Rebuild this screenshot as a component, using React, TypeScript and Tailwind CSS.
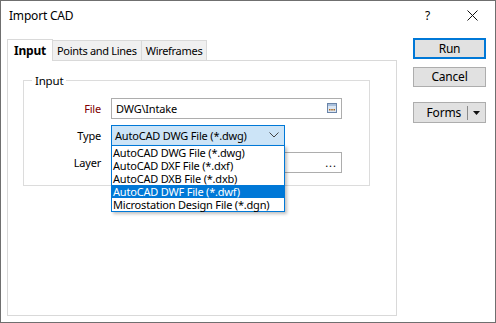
import { useState } from "react"

const fileTypes = [
  "AutoCAD DWG File (*.dwg)",
  "AutoCAD DXF File (*.dxf)",
  "AutoCAD DXB File (*.dxb)",
  "AutoCAD DWF File (*.dwf)",
  "Microstation Design File (*.dgn)",
]

function BrowseIcon() {
  return (
    <svg width="10" height="10" viewBox="0 0 10 10">
      <rect x="0.5" y="0.5" width="9" height="9" fill="#dbe6f3" stroke="#6a84a8" />
      <rect x="1" y="1" width="8" height="2" fill="#a9c0dc" />
      <rect x="2" y="6" width="1.5" height="1.5" fill="#b06a1c" />
      <rect x="4.25" y="6" width="1.5" height="1.5" fill="#b06a1c" />
      <rect x="6.5" y="6" width="1.5" height="1.5" fill="#b06a1c" />
    </svg>
  )
}

function Chevron() {
  return (
    <svg width="10" height="6" viewBox="0 0 10 6">
      <path d="M0.5 0.5 L5 5 L9.5 0.5" fill="none" stroke="#444" strokeWidth="1" />
    </svg>
  )
}

export default function App() {
  const [tab] = useState("Input")
  const tabs = ["Input", "Points and Lines", "Wireframes"]

  return (
    <div className="flex h-[323px] w-[496px] flex-col whitespace-nowrap border border-[#6f6f6f] bg-white font-['Noto_Sans',sans-serif] text-[11px] leading-none tracking-[-0.2px] text-black">
      {/* title bar */}
      <div className="flex h-[29px] shrink-0 items-center text-[12px]">
        <span className="pl-[8px]">Import CAD</span>
        <span className="ml-auto mr-[37px]">?</span>
        <svg width="11" height="11" viewBox="0 0 11 11" className="mr-[17px]">
          <path d="M0.5 0.5 L10.5 10.5 M10.5 0.5 L0.5 10.5" stroke="#111" strokeWidth="1" />
        </svg>
      </div>

      <div className="flex flex-1 pt-[8px]">
        {/* left side: tabs and panel */}
        <div className="flex w-[396px] flex-col pb-[6px] pl-[6px]">
          <div className="flex h-[22px] items-end">
            {tabs.map((t) =>
              t === tab ? (
                <div
                  key={t}
                  className="relative z-10 -mb-px flex h-[22px] w-[46px] items-center justify-center border border-b-0 border-[#d9d9d9] bg-white text-[12px] font-bold"
                >
                  {t}
                </div>
              ) : (
                <div
                  key={t}
                  className="flex h-[20px] items-center border border-b-0 border-l-0 border-[#d9d9d9] bg-[#f0f0f0] px-[4px] tracking-[-0.3px]"
                >
                  {t}
                </div>
              )
            )}
          </div>

          <div className="flex-1 border border-[#d9d9d9] px-[15px] pt-[14px]">
            <fieldset className="mr-[11px] h-[111px] border border-[#dcdcdc] px-0 pb-0">
              <legend className="ml-[8px] px-[3px] text-[11.5px]">Input</legend>

              <div className="flex flex-col gap-[6px] pl-[37px] pr-[27px] pt-[11px]">
                <div className="flex items-center">
                  <span className="w-[50px] pr-[10px] text-right text-[#800000]">File</span>
                  <div className="flex h-[21px] flex-1 items-center border border-[#adadad] bg-white pl-[4px] pr-[4px]">
                    <span>DWG\Intake</span>
                    <span className="ml-auto">
                      <BrowseIcon />
                    </span>
                  </div>
                </div>

                <div className="flex items-center">
                  <span className="w-[50px] pr-[10px] text-right">Type</span>
                  <div className="relative w-[174px]">
                    <div className="flex h-[21px] items-center border border-[#0078d7] bg-[#cce4f7] pl-[3px] pr-[5px]">
                      <span>{fileTypes[0]}</span>
                      <span className="ml-auto">
                        <Chevron />
                      </span>
                    </div>
                    <div className="absolute left-0 top-[20px] z-20 w-[174px] border border-[#0078d7] bg-white shadow-[2px_2px_3px_rgba(0,0,0,0.25)]">
                      {fileTypes.map((f, i) => (
                        <div
                          key={f}
                          className={
                            i === 3
                              ? "h-[13px] bg-[#0078d7] pl-[1px] leading-[13px] text-white"
                              : "h-[13px] pl-[1px] leading-[13px]"
                          }
                        >
                          {f}
                        </div>
                      ))}
                    </div>
                  </div>
                </div>

                <div className="flex items-center">
                  <span className="w-[50px] pr-[10px] text-right">Layer</span>
                  <div className="flex h-[21px] flex-1 items-center border border-[#adadad] bg-white pr-[4px]">
                    <span className="ml-auto tracking-[1px]">...</span>
                  </div>
                </div>
              </div>
            </fieldset>
          </div>
        </div>

        {/* right side: buttons */}
        <div className="flex flex-col pl-[16px] text-[12px]">
          <button className="flex h-[21px] w-[73px] items-center justify-center border-2 border-[#0078d7] bg-[#e1e1e1]">
            Run
          </button>
          <button className="mt-[8px] flex h-[20px] w-[73px] items-center justify-center border border-[#adadad] bg-[#e1e1e1]">
            Cancel
          </button>
          <button className="mt-[15px] flex h-[21px] w-[73px] items-center border border-[#adadad] bg-[#e1e1e1]">
            <span className="ml-auto pr-[6px]">Forms</span>
            <span className="h-[14px] w-px bg-[#8a8a8a]" />
            <span className="px-[5px]">
              <svg width="7" height="4" viewBox="0 0 7 4">
                <path d="M0 0 L7 0 L3.5 4 Z" fill="#111" />
              </svg>
            </span>
          </button>
        </div>
      </div>
    </div>
  )
}
